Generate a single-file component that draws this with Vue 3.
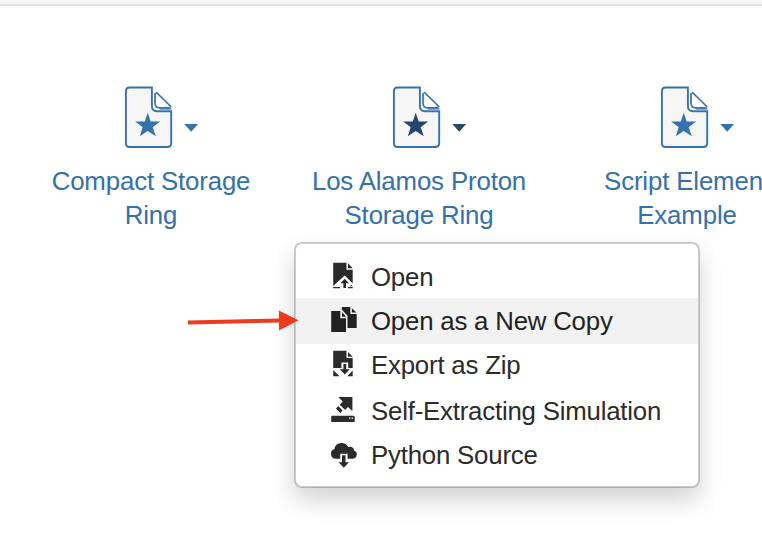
<script setup>
const simulations = [
  { lines: ['Compact Storage', 'Ring'], active: false },
  { lines: ['Los Alamos Proton', 'Storage Ring'], active: true },
  { lines: ['Script Element', 'Example'], active: false },
]
const actions = [
  { icon: 'open', label: 'Open' },
  { icon: 'copy', label: 'Open as a New Copy', selected: true },
  { icon: 'zip', label: 'Export as Zip' },
  { icon: 'extract', label: 'Self-Extracting Simulation' },
  { icon: 'cloud', label: 'Python Source' },
]
</script>

<template>
  <main class="page">
    <div class="topbar"></div>
    <section class="grid">
      <article v-for="sim in simulations" :key="sim.lines[0]" class="item" :class="{ active: sim.active }">
        <svg class="doc" width="78" height="64" viewBox="0 0 78 64">
          <path class="paper" d="M5.5 1.5H27.9V20Q27.9 25.2 33 25.2H47.2V57Q47.2 61 43.2 61H5.5Q1.9 61 1.9 57V5.5Q1.9 1.5 5.5 1.5Z" />
          <path class="shade" d="M36 23.2H47.5" />
          <path class="flap" d="M31 7V17Q31 21.8 35.5 21.8H46.5M32 6L47.3 21" />
          <path class="mark" d="M23.7 26.8L26.7 35.6H36.2L28.7 41.2L31.8 50.2L23.7 44.9L15.8 50.2L18.7 41.2L11.2 35.6H20.8Z" />
          <path class="mark" d="M60.3 38H74.1L67.2 45.8Z" />
        </svg>
        <h2 class="title"><span v-for="line in sim.lines" :key="line">{{ line }}</span></h2>
      </article>
    </section>

    <ul class="menu">
      <li v-for="a in actions" :key="a.label" class="row" :class="[a.icon, { selected: a.selected }]">
        <svg class="glyph" width="28" height="28" viewBox="0 0 28 28">
          <g v-if="a.icon === 'open'">
            <path d="M3.2 0.7H16.5V7.8H22.7V21.6L14.7 13.5L3.2 24ZM18 1.3L22.7 6.2H18Z" />
            <path d="M14.7 16.8L19 21.2H16V26H13.4V21.2H10.4ZM3.2 25H10V26.2H3.2ZM18 25H22.7V26.2H18ZM20 24.2L21.3 22.8L22.7 24.2Z" />
          </g>
          <g v-else-if="a.icon === 'copy'">
            <path d="M1.2 4H10.3V11.2H16V25H1.2ZM12 5L16 9.8H12Z" />
            <path d="M11.8 0H20.3V7H26.7V21H17.5V8.8L11.8 2.5ZM21.9 1.3L26.5 5.5H21.9Z" />
          </g>
          <g v-else-if="a.icon === 'zip'">
            <path d="M3.2 -1.2H16.5V6H22.7V16H18.2V10.5H11.4V16H3.2ZM18 0L22.7 4.7H18Z" />
            <path d="M13.4 12H16.2V17.3H19.8L14.8 22.5L9.8 17.3H13.4ZM3.2 18L9.5 24.2H3.2ZM22.7 18.6V24.2H17.2Z" />
          </g>
          <g v-else-if="a.icon === 'extract'">
            <path d="M8.3 0H22.4V14L17.9 10L15.2 13L9.7 7.7L12.7 4.6ZM8.3 9L12.5 13.5L10.3 16L6 11.7Z" />
            <path fill-rule="evenodd" d="M2.4 18.8H23.4Q24.7 18.8 24.7 20.1V25H1.2V20.1Q1.2 18.8 2.4 18.8ZM19 20.6V21.8H20.4V20.6ZM21.6 20.6V21.8H23V20.6Z" />
          </g>
          <g v-else transform="translate(0 -1.8)">
            <path d="M6.4 18.5Q1 18.3 1 13.2Q1 9.8 4.4 8.7Q5.2 3 11.7 2.8Q16.2 2.8 18.2 6.7Q23.7 5.8 24.1 10.3Q27 11.6 26.8 14.2Q26.4 18.5 22 18.5H17.6V13.5H10.2V18.5Z" />
            <path d="M12 15H15.5V22H19L13.8 27.5L8.6 22H12Z" />
          </g>
        </svg>
        <span class="label">{{ a.label }}</span>
      </li>
    </ul>

    <svg class="arrow" width="114" height="24" viewBox="0 0 114 24">
      <path d="M1 12.4L94 10.5" />
      <path class="head" d="M91.9 0.5L111.5 10.2L92.1 20.5Z" />
    </svg>
  </main>
</template>

<style>
body { background: #fff; overflow: hidden; }
</style>

<style scoped>
.page {
  position: relative;
  width: 762px;
  height: 534px;
  overflow: hidden;
  box-sizing: border-box;
  font-family: "Liberation Sans", Arial, sans-serif;
}
.topbar {
  height: 4px;
  background: #f5f5f5;
  border-bottom: 2px solid #e2e2e2;
}
.grid {
  display: grid;
  grid-template-columns: repeat(3, 268px);
  padding: 80px 0 0 17px;
}
.doc { display: block; margin-left: 107px; fill: none; stroke: #3572b0; stroke-width: 1.9; }
.paper { fill: #f6f6f6; }
.flap { stroke-width: 1.7; }
.shade { stroke: #8baad0; stroke-width: 2.2; }
.mark { fill: #3572b0; stroke: none; }
.active .mark { fill: #24476f; }
.title {
  margin: 14px 0 0;
  color: #3470ad;
  font-size: 25.8px;
  font-weight: 400;
  letter-spacing: -0.14px;
  line-height: 34px;
  text-align: center;
}
.title span { display: block; white-space: nowrap; }
.menu {
  position: absolute;
  left: 294px;
  top: 242px;
  width: 406px;
  height: 246px;
  box-sizing: border-box;
  margin: 0;
  padding: 10px 0;
  list-style: none;
  background: #fff;
  background-clip: padding-box;
  border: 2px solid rgba(0, 0, 0, 0.2);
  border-radius: 8px;
  box-shadow: 0 12px 24px rgba(0, 0, 0, 0.175);
}
.row {
  display: flex;
  align-items: center;
  height: 44px;
  padding-left: 34px;
  gap: 13px;
  color: #2b2b2b;
  font-size: 25.8px;
  letter-spacing: -0.2px;
  white-space: nowrap;
}
.row.selected { height: 46px; background: #f2f2f2; color: #222; }
.row.extract { height: 46px; }
.label { line-height: 30px; }
.open .label { padding-top: 2px; }
.zip .label, .cloud .label { padding-bottom: 2px; }
.glyph { flex: none; fill: currentColor; overflow: visible; }
.arrow { position: absolute; left: 187px; top: 310px; fill: none; stroke: #ee3a1d; stroke-width: 4; }
.head { fill: #ee3a1d; stroke: none; }
</style>
